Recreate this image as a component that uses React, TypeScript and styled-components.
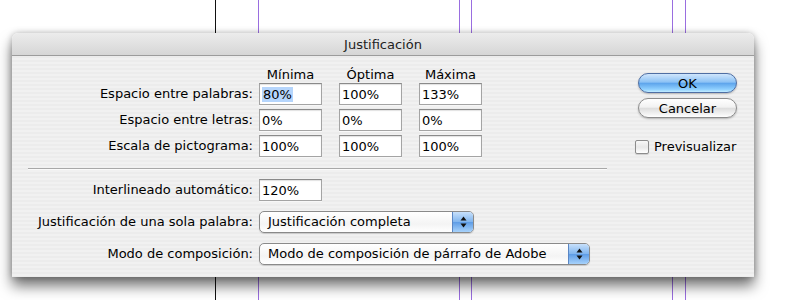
import React from 'react';
import styled, { createGlobalStyle } from 'styled-components';

const GlobalStyle = createGlobalStyle`
  html, body {
    margin: 0;
    padding: 0;
    background: #ffffff;
  }
  body {
    font-family: "DejaVu Sans", "Liberation Sans", sans-serif;
    font-size: 13px;
    color: #000;
  }
`;

const guide = (color: string, x: number) =>
  `linear-gradient(${color}, ${color}) ${x}px 0 / 1px 100% no-repeat`;

const Page = styled.div`
  width: 794px;
  height: 300px;
  box-sizing: border-box;
  padding: 33px 0 0 12px;
  overflow: hidden;
  background: ${[
    guide('#111111', 215),
    guide('#9a6ee0', 258),
    guide('#9a6ee0', 459),
    guide('#9a6ee0', 471),
    guide('#9a6ee0', 672),
    guide('#9a6ee0', 685),
  ].join(', ')}, #ffffff;
`;

const Dialog = styled.div`
  width: 742px;
  height: 244px;
  display: flex;
  flex-direction: column;
  border-radius: 6px 6px 0 0;
  box-shadow: 0 9px 14px rgba(0, 0, 0, 0.55), 0 0 6px rgba(0, 0, 0, 0.25);
  overflow: hidden;
`;

const TitleBar = styled.div`
  height: 22px;
  flex: none;
  display: flex;
  align-items: center;
  justify-content: center;
  font-size: 13px;
  color: #222;
  background: linear-gradient(#ececec, #d6d6d6);
  border-bottom: 1px solid #9c9c9c;
`;

const Body = styled.div`
  flex: 1;
  display: flex;
  padding: 10px 17px 12px 16px;
  background: repeating-linear-gradient(#ececec 0 2px, #f1f1f1 2px 4px);
`;

const Main = styled.div`
  width: 579px;
  display: flex;
  flex-direction: column;
`;

const HeaderRow = styled.div`
  display: flex;
  height: 17px;
  padding-left: 231px;
`;

const ColHead = styled.div`
  width: 63px;
  margin-right: 17px;
  text-align: center;
  line-height: 17px;
`;

const FieldGrid = styled.div`
  display: grid;
  grid-template-columns: 231px 80px 80px 63px;
  grid-auto-rows: 22px;
  row-gap: 4px;
  align-items: center;
`;

const Label = styled.div`
  justify-self: stretch;
  text-align: right;
  padding-right: 6px;
  white-space: nowrap;
  line-height: 22px;
`;

const Field = styled.div`
  width: 63px;
  height: 22px;
  box-sizing: border-box;
  background: #fff;
  border: 1px solid #a4a4a4;
  border-top-color: #8a8a8a;
  box-shadow: inset 0 1px 1px rgba(0, 0, 0, 0.12), 0 1px 0 rgba(255, 255, 255, 0.6);
  padding: 1px 3px 0 2px;
  line-height: 20px;
`;

const Selected = styled.span`
  background: #b5d5fc;
  padding: 0 1px;
`;

const Separator = styled.div`
  height: 1px;
  margin: 11px 0 10px;
  background: #a8a8a8;
  box-shadow: 0 1px 0 #fafafa;
`;

const LowerGrid = styled.div`
  display: grid;
  grid-template-columns: 231px auto;
  grid-auto-rows: 22px;
  row-gap: 10px;
  align-items: center;
  justify-items: start;
`;

const Popup = styled.div<{ $width: number }>`
  width: ${p => p.$width}px;
  height: 22px;
  box-sizing: border-box;
  display: flex;
  border: 1px solid #8a8a8a;
  border-radius: 5px;
  background: linear-gradient(#ffffff, #f4f4f4 60%, #ffffff);
  box-shadow: 0 1px 1px rgba(0, 0, 0, 0.15);
  overflow: hidden;
`;

const PopupText = styled.div`
  flex: 1;
  padding-left: 8px;
  line-height: 20px;
  white-space: nowrap;
`;

const PopupArrows = styled.div`
  width: 20px;
  flex: none;
  display: flex;
  align-items: center;
  justify-content: center;
  border-left: 1px solid #5a86c4;
  background: linear-gradient(#c7e0fb, #7fb4ee 50%, #5d9ce6 51%, #a7d2fb);
`;

const Side = styled.div`
  margin-left: auto;
  width: 99px;
  padding-top: 7px;
  display: flex;
  flex-direction: column;
`;

const PushButton = styled.div<{ $default?: boolean }>`
  height: 20px;
  box-sizing: border-box;
  border-radius: 10px;
  display: flex;
  align-items: center;
  justify-content: center;
  font-size: 13px;
  border: 1px solid ${p => (p.$default ? '#4f6ea3' : '#8c8c8c')};
  background: ${p =>
    p.$default
      ? 'linear-gradient(#d0e6fc, #8cc2f5 45%, #5ea5ec 52%, #8fd0ff 85%, #c2ecff)'
      : 'linear-gradient(#ffffff, #f2f2f2 45%, #dedede 52%, #f4f4f4 85%, #ffffff)'};
  box-shadow: 0 1px 2px rgba(0, 0, 0, 0.25);
  & + & {
    margin-top: 5px;
  }
`;

const CheckRow = styled.label`
  display: flex;
  align-items: center;
  gap: 5px;
  margin-top: 21px;
  margin-left: -3px;
  white-space: nowrap;
`;

const CheckBox = styled.span`
  width: 14px;
  height: 14px;
  box-sizing: border-box;
  border: 1px solid #8c8c8c;
  border-radius: 2px;
  background: linear-gradient(#f8f8f8, #e8e8e8 50%, #ffffff);
  box-shadow: 0 1px 1px rgba(0, 0, 0, 0.15);
`;

const Arrows = () => (
  <svg width="7" height="12" viewBox="0 0 7 12">
    <path d="M3.5 0.5 L6.5 4.5 L0.5 4.5 Z" fill="#111" />
    <path d="M3.5 11.5 L6.5 7.5 L0.5 7.5 Z" fill="#111" />
  </svg>
);

const rows = [
  { label: 'Espacio entre palabras:', values: ['80%', '100%', '133%'] },
  { label: 'Espacio entre letras:', values: ['0%', '0%', '0%'] },
  { label: 'Escala de pictograma:', values: ['100%', '100%', '100%'] },
];

export default function App() {
  return (
    <>
      <GlobalStyle />
      <Page>
        <Dialog>
          <TitleBar>Justificación</TitleBar>
          <Body>
            <Main>
              <HeaderRow>
                <ColHead>Mínima</ColHead>
                <ColHead>Óptima</ColHead>
                <ColHead>Máxima</ColHead>
              </HeaderRow>
              <FieldGrid>
                {rows.map((r, ri) => (
                  <React.Fragment key={r.label}>
                    <Label>{r.label}</Label>
                    {r.values.map((v, vi) => (
                      <Field key={vi}>
                        {ri === 0 && vi === 0 ? <Selected>{v}</Selected> : v}
                      </Field>
                    ))}
                  </React.Fragment>
                ))}
              </FieldGrid>
              <Separator />
              <LowerGrid>
                <Label>Interlineado automático:</Label>
                <Field>120%</Field>
                <Label>Justificación de una sola palabra:</Label>
                <Popup $width={215}>
                  <PopupText>Justificación completa</PopupText>
                  <PopupArrows><Arrows /></PopupArrows>
                </Popup>
                <Label>Modo de composición:</Label>
                <Popup $width={331}>
                  <PopupText>Modo de composición de párrafo de Adobe</PopupText>
                  <PopupArrows><Arrows /></PopupArrows>
                </Popup>
              </LowerGrid>
            </Main>
            <Side>
              <PushButton $default>OK</PushButton>
              <PushButton>Cancelar</PushButton>
              <CheckRow>
                <CheckBox />
                Previsualizar
              </CheckRow>
            </Side>
          </Body>
        </Dialog>
      </Page>
    </>
  );
}
